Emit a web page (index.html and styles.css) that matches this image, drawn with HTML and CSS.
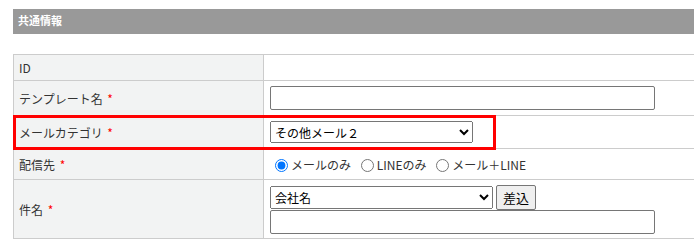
FILE: index.html
```html
<!DOCTYPE html>
<html lang="ja">
<head>
<meta charset="utf-8">
<link rel="stylesheet" href="styles.css">
</head>
<body>
<div class="page">
  <div class="section-head">共通情報</div>
  <div class="form-wrap">
    <table class="form">
      <tr class="r-id">
        <th>ID</th>
        <td></td>
      </tr>
      <tr class="r-tpl">
        <th>テンプレート名 <span class="req">*</span></th>
        <td><input type="text" class="txt"></td>
      </tr>
      <tr class="r-cat">
        <th>メールカテゴリ <span class="req">*</span></th>
        <td><select class="sel-cat"><option>その他メール２</option></select></td>
      </tr>
      <tr class="r-dest">
        <th>配信先 <span class="req">*</span></th>
        <td class="radios">
          <label><input type="radio" name="d" checked>メールのみ</label>
          <label><input type="radio" name="d">LINEのみ</label>
          <label><input type="radio" name="d">メール＋LINE</label>
        </td>
      </tr>
      <tr class="r-subj">
        <th>件名 <span class="req">*</span></th>
        <td>
          <div class="subj-line"><select class="sel-subj"><option>会社名</option></select><button class="btn">差込</button></div>
          <input type="text" class="txt txt-subj">
        </td>
      </tr>
    </table>
    <div class="highlight"></div>
  </div>
</div>
</body>
</html>
```

FILE: styles.css
```css
html, body {
  margin: 0;
  padding: 0;
  background: #fff;
  overflow: hidden;
}
body {
  font-family: "Noto Sans CJK JP", "Noto Sans", sans-serif;
  font-size: 12px;
  color: #333;
}
.page {
  padding: 9px 0 0 13px;
}
.section-head {
  height: 25px;
  line-height: 23px;
  background: #999;
  color: #fff;
  font-weight: bold;
  font-size: 11px;
  padding-left: 5px;
}
.form-wrap {
  position: relative;
  margin-top: 20px;
}
.form {
  border-collapse: collapse;
  width: 100%;
}
.form th, .form td {
  border: 1px solid #ccc;
  padding: 0 6px;
  vertical-align: middle;
  text-align: left;
  font-weight: normal;
}
.form td {
  border-right: none;
}
.form th {
  width: 238px;
  background: #f2f3f3;
  padding-left: 5px;
}
.req {
  color: #f00;
  margin-left: 2px;
}
.r-id th { height: 25px; }
.r-tpl th { height: 34px; }
.r-cat th { height: 32px; }
.r-dest th { height: 30px; }
.r-subj th { height: 58px; }

input, select, button {
  font-family: "Noto Sans CJK JP", "Noto Sans", sans-serif;
  font-size: 12px;
  color: #000;
  box-sizing: border-box;
  vertical-align: middle;
}
.txt {
  display: block;
  width: 385px;
  height: 24px;
  margin: 0;
  border: 1px solid #767676;
  border-radius: 2px;
  padding: 1px 3px;
}
.sel-cat {
  display: block;
  width: 203px;
  height: 22px;
  margin: 0;
}
.radios label {
  display: inline-block;
  margin-right: 2px;
}
.radios input {
  margin: 0 3px 0 5px;
  width: 13px;
  height: 13px;
  vertical-align: -2px;
}
.subj-line {
  display: flex;
  align-items: center;
  gap: 3px;
}
.sel-subj {
  width: 223px;
  height: 23px;
  margin: 0;
}
.btn {
  width: 40px;
  height: 25px;
  margin: 0;
  padding: 0;
  border: 1px solid #767676;
  border-radius: 2px;
  background: #efefef;
  font-size: 13px;
}
.txt-subj {
  height: 24px;
}
.highlight {
  position: absolute;
  left: 0;
  top: 61px;
  width: 483px;
  height: 35px;
  border: 3px solid #f00;
  box-sizing: border-box;
  pointer-events: none;
}
```
